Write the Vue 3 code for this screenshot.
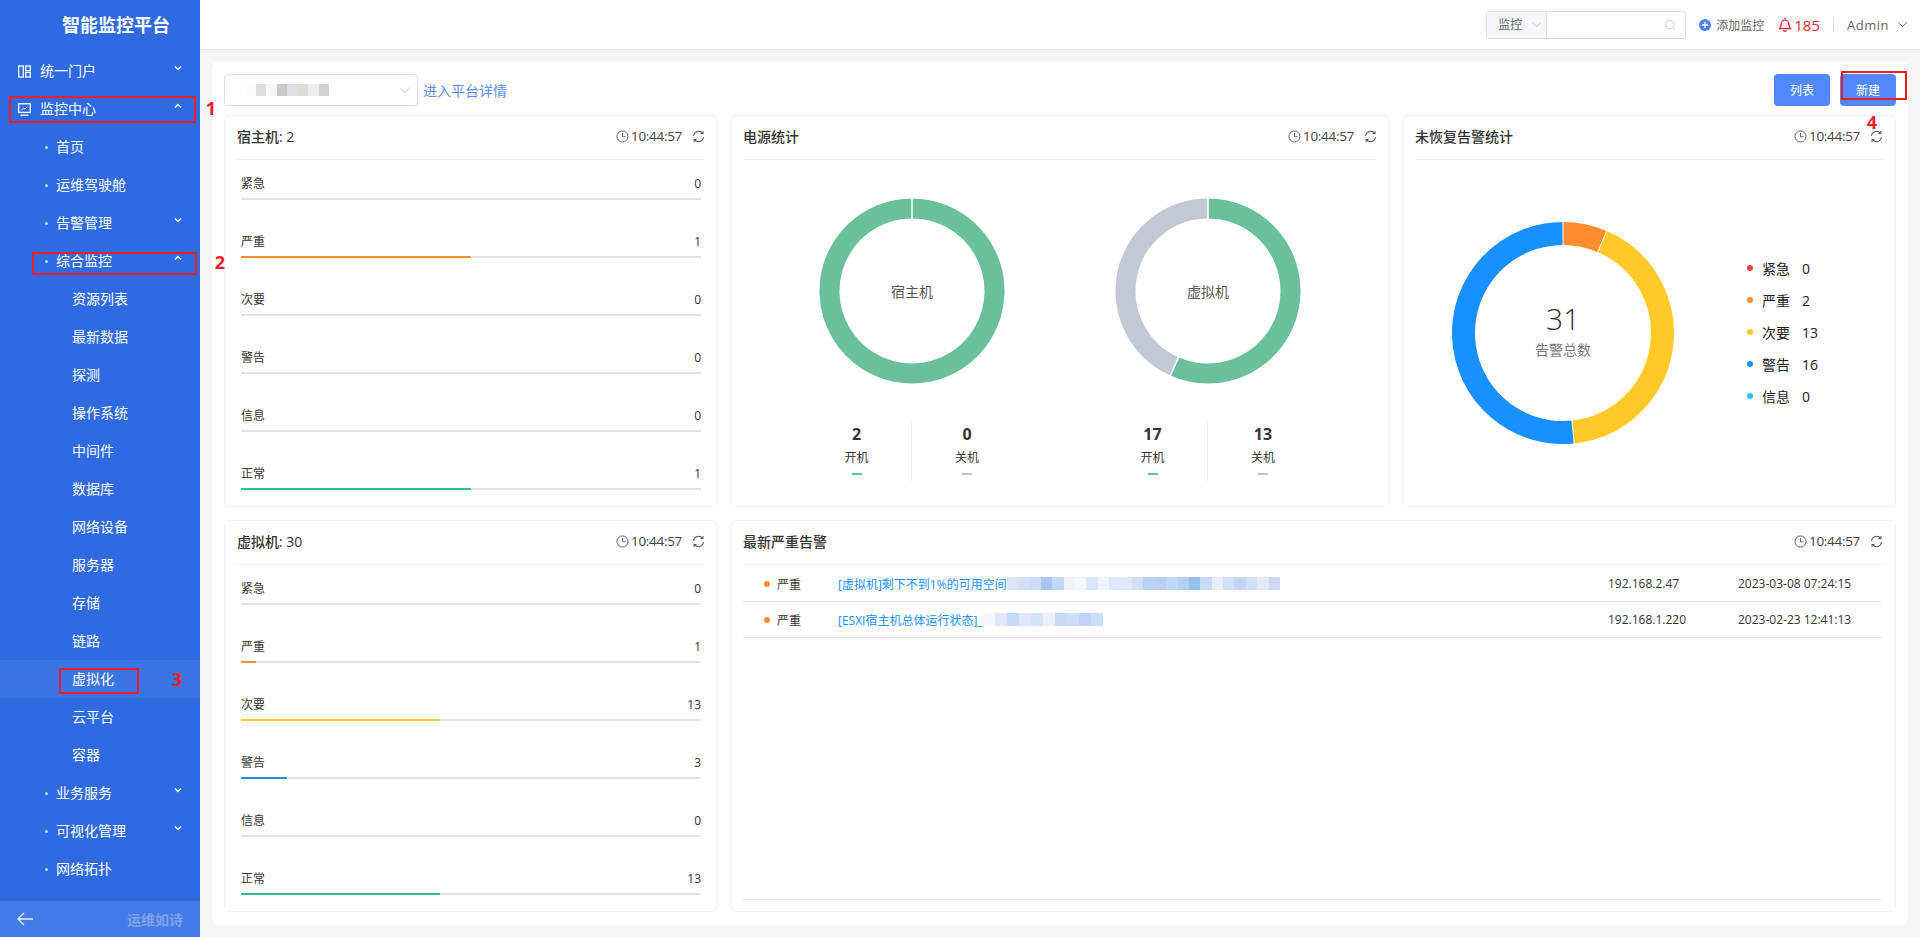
<template>
  <div class="app">
    <aside class="side">
      <div class="logo">智能监控平台</div>
      <nav class="nav">
        <div
          v-for="item in menu"
          :key="item.text"
          class="nav-row"
          :class="['lv' + item.level, { active: item.active }]"
        >
          <svg v-if="item.icon === 'grid'" class="nav-icon" viewBox="0 0 13 13" fill="none" stroke="#fff" stroke-width="1.3">
            <rect x="0.7" y="1" width="4.6" height="11" />
            <rect x="7.7" y="1" width="4.6" height="4.6" />
            <rect x="7.7" y="7.4" width="4.6" height="4.6" />
          </svg>
          <svg v-if="item.icon === 'monitor'" class="nav-icon" viewBox="0 0 13 13" fill="none" stroke="#fff" stroke-width="1.3">
            <rect x="0.7" y="0.8" width="11.6" height="8.6" />
            <path d="M2.5 12.2h8" />
            <path d="M3.6 7l2-1.8 1.3.8 2.4-2.2" stroke-width="1" />
          </svg>
          <i v-if="item.level === 2" class="dot"></i>
          <span class="nav-text">{{ item.text }}</span>
          <svg v-if="item.arrow" class="nav-arrow" viewBox="0 0 8 6" fill="none" stroke="#fff" stroke-width="1.3">
            <path :d="item.arrow === 'up' ? 'M1 4.5L4 1.5l3 3' : 'M1 1.5l3 3 3-3'" />
          </svg>
        </div>
      </nav>
      <div class="side-foot">
        <svg class="back" viewBox="0 0 16 14" fill="none" stroke="#e6eeff" stroke-width="1.3">
          <path d="M16 7H1M7 1L1 7l6 6" />
        </svg>
        <span>运维如诗</span>
      </div>
    </aside>

    <div class="right">
      <header class="top">
        <div class="search">
          <div class="search-type">
            <span>监控</span>
            <svg viewBox="0 0 12 8" fill="none" stroke="#c0c4cc"><path d="M1 1.5l5 5 5-5" /></svg>
          </div>
          <div class="search-input">
            <svg viewBox="0 0 14 14" fill="none" stroke="#c6cad2" stroke-width="1.1">
              <circle cx="6.5" cy="6.5" r="5" />
              <path d="M10.2 10.2l2.6 2.6" />
            </svg>
          </div>
        </div>
        <div class="add">
          <svg viewBox="0 0 12 12">
            <circle cx="6" cy="6" r="6" fill="#4f80f6" />
            <path d="M3 6h6M6 3v6" stroke="#fff" stroke-width="1.4" />
          </svg>
          <span>添加监控</span>
        </div>
        <div class="bell">
          <svg viewBox="0 0 14 15" fill="none" stroke="#f5222d" stroke-width="1.3">
            <path d="M7 0.8v1.4M1.6 11.6c1.2-1.2 1.6-2.6 1.6-4.6a3.8 3.8 0 0 1 7.6 0c0 2 .4 3.4 1.6 4.6zM5.3 13.1a1.8 1.8 0 0 0 3.4 0" />
          </svg>
          <span>185</span>
        </div>
        <i class="top-line"></i>
        <div class="user">
          <span>Admin</span>
          <svg viewBox="0 0 12 8" fill="none" stroke="#666" stroke-width="1.1"><path d="M1 1.5l5 5 5-5" /></svg>
        </div>
      </header>

      <main class="main">
        <section class="panel">
          <div class="toolbar">
            <div class="platform">
              <div class="mosaic mosaic-select">
                <i v-for="(c, i) in selectCells" :key="i" :style="{ background: c }"></i>
              </div>
              <svg viewBox="0 0 12 8" fill="none" stroke="#c0c4cc"><path d="M1 1.5l5 5 5-5" /></svg>
            </div>
            <a class="detail">进入平台详情</a>
            <div class="btns">
              <button type="button">列表</button>
              <button type="button">新建</button>
            </div>
          </div>

          <div class="grid">
            <div class="card">
              <div class="card-head">
                <span class="card-title">宿主机: 2</span>
                <span class="time">
                  <svg class="clock" viewBox="0 0 14 14" fill="none" stroke="#555" stroke-width="1">
                    <circle cx="7" cy="7" r="6" />
                    <path d="M7 3.2V7.3h3.2" />
                  </svg>
                  10:44:57
                </span>
                <svg class="refresh" viewBox="0 0 14 14" fill="none" stroke="#555" stroke-width="1.1">
                  <path d="M1.6 6.2A5.5 5.5 0 0 1 11.4 3.6M12.4 7.8A5.5 5.5 0 0 1 2.6 10.4" />
                  <path d="M11.8 1.2v2.6H9.2M2.2 12.8v-2.6h2.6" />
                </svg>
              </div>
              <div class="levels">
                <div v-for="row in hostLevels" :key="row.name" class="level">
                  <div class="level-text">
                    <span>{{ row.name }}</span>
                    <span>{{ row.value }}</span>
                  </div>
                  <div class="track"><div class="fill" :style="{ width: row.pct + '%', background: row.color }"></div></div>
                </div>
              </div>
            </div>

            <div class="card">
              <div class="card-head">
                <span class="card-title">电源统计</span>
                <span class="time">
                  <svg class="clock" viewBox="0 0 14 14" fill="none" stroke="#555" stroke-width="1">
                    <circle cx="7" cy="7" r="6" />
                    <path d="M7 3.2V7.3h3.2" />
                  </svg>
                  10:44:57
                </span>
                <svg class="refresh" viewBox="0 0 14 14" fill="none" stroke="#555" stroke-width="1.1">
                  <path d="M1.6 6.2A5.5 5.5 0 0 1 11.4 3.6M12.4 7.8A5.5 5.5 0 0 1 2.6 10.4" />
                  <path d="M11.8 1.2v2.6H9.2M2.2 12.8v-2.6h2.6" />
                </svg>
              </div>
              <div class="power">
                <div v-for="p in power" :key="p.name" class="power-item">
                  <div class="ring-wrap">
                    <svg class="ring" viewBox="0 0 188 188">
                      <path
                        v-for="s in ringPaths(p.parts, 82.5, 94)"
                        :key="s.color"
                        :d="s.d"
                        fill="none"
                        :stroke="s.color"
                        stroke-width="20"
                      />
                      <path
                        v-for="(g, i) in ringGaps(p.parts, 71, 94, 94)"
                        :key="i"
                        :d="g"
                        stroke="#fff"
                        stroke-width="1.6"
                      />
                    </svg>
                    <span class="ring-label">{{ p.name }}</span>
                  </div>
                  <div class="power-nums">
                    <div class="num-col">
                      <b>{{ p.on }}</b>
                      <span>开机</span>
                      <i class="tick on"></i>
                    </div>
                    <div class="num-col">
                      <b>{{ p.off }}</b>
                      <span>关机</span>
                      <i class="tick off"></i>
                    </div>
                  </div>
                </div>
              </div>
            </div>

            <div class="card">
              <div class="card-head">
                <span class="card-title">未恢复告警统计</span>
                <span class="time">
                  <svg class="clock" viewBox="0 0 14 14" fill="none" stroke="#555" stroke-width="1">
                    <circle cx="7" cy="7" r="6" />
                    <path d="M7 3.2V7.3h3.2" />
                  </svg>
                  10:44:57
                </span>
                <svg class="refresh" viewBox="0 0 14 14" fill="none" stroke="#555" stroke-width="1.1">
                  <path d="M1.6 6.2A5.5 5.5 0 0 1 11.4 3.6M12.4 7.8A5.5 5.5 0 0 1 2.6 10.4" />
                  <path d="M11.8 1.2v2.6H9.2M2.2 12.8v-2.6h2.6" />
                </svg>
              </div>
              <div class="alarm">
                <div class="alarm-ring">
                  <svg class="ring" viewBox="0 0 224 224">
                    <path
                      v-for="s in ringPaths(alarmParts, 99.5, 112)"
                      :key="s.color"
                      :d="s.d"
                      fill="none"
                      :stroke="s.color"
                      stroke-width="23"
                    />
                    <path
                      v-for="(g, i) in ringGaps(alarmParts, 87, 112, 112)"
                      :key="i"
                      :d="g"
                      stroke="#fff"
                      stroke-width="1"
                    />
                  </svg>
                  <div class="alarm-center">
                    <strong>31</strong>
                    <span>告警总数</span>
                  </div>
                </div>
                <ul class="legend">
                  <li v-for="l in legend" :key="l.name">
                    <i :style="{ background: l.color }"></i>
                    <span class="legend-name">{{ l.name }}</span>
                    <span>{{ l.value }}</span>
                  </li>
                </ul>
              </div>
            </div>

            <div class="card">
              <div class="card-head">
                <span class="card-title">虚拟机: 30</span>
                <span class="time">
                  <svg class="clock" viewBox="0 0 14 14" fill="none" stroke="#555" stroke-width="1">
                    <circle cx="7" cy="7" r="6" />
                    <path d="M7 3.2V7.3h3.2" />
                  </svg>
                  10:44:57
                </span>
                <svg class="refresh" viewBox="0 0 14 14" fill="none" stroke="#555" stroke-width="1.1">
                  <path d="M1.6 6.2A5.5 5.5 0 0 1 11.4 3.6M12.4 7.8A5.5 5.5 0 0 1 2.6 10.4" />
                  <path d="M11.8 1.2v2.6H9.2M2.2 12.8v-2.6h2.6" />
                </svg>
              </div>
              <div class="levels">
                <div v-for="row in vmLevels" :key="row.name" class="level">
                  <div class="level-text">
                    <span>{{ row.name }}</span>
                    <span>{{ row.value }}</span>
                  </div>
                  <div class="track"><div class="fill" :style="{ width: row.pct + '%', background: row.color }"></div></div>
                </div>
              </div>
            </div>

            <div class="card wide">
              <div class="card-head">
                <span class="card-title">最新严重告警</span>
                <span class="time">
                  <svg class="clock" viewBox="0 0 14 14" fill="none" stroke="#555" stroke-width="1">
                    <circle cx="7" cy="7" r="6" />
                    <path d="M7 3.2V7.3h3.2" />
                  </svg>
                  10:44:57
                </span>
                <svg class="refresh" viewBox="0 0 14 14" fill="none" stroke="#555" stroke-width="1.1">
                  <path d="M1.6 6.2A5.5 5.5 0 0 1 11.4 3.6M12.4 7.8A5.5 5.5 0 0 1 2.6 10.4" />
                  <path d="M11.8 1.2v2.6H9.2M2.2 12.8v-2.6h2.6" />
                </svg>
              </div>
              <div class="table">
                <div v-for="r in alarms" :key="r.ip" class="tr">
                  <span class="sev"><i></i>严重</span>
                  <span class="msg">
                    <a>{{ r.msg }}</a>
                    <span class="mosaic mosaic-link">
                      <i v-for="(c, i) in r.cells" :key="i" :style="{ background: c }"></i>
                    </span>
                  </span>
                  <span>{{ r.ip }}</span>
                  <span>{{ r.time }}</span>
                </div>
              </div>
            </div>
          </div>
        </section>
      </main>
    </div>

    <!-- red annotations on top of the screenshot -->
    <i class="mark m1"></i><b class="mark-no n1">1</b>
    <i class="mark m2"></i><b class="mark-no n2">2</b>
    <i class="mark m3"></i><b class="mark-no n3">3</b>
    <i class="mark m4"></i><b class="mark-no n4">4</b>
  </div>
</template>

<script setup>
const menu = [
  { text: '统一门户', level: 1, icon: 'grid', arrow: 'down' },
  { text: '监控中心', level: 1, icon: 'monitor', arrow: 'up' },
  { text: '首页', level: 2 },
  { text: '运维驾驶舱', level: 2 },
  { text: '告警管理', level: 2, arrow: 'down' },
  { text: '综合监控', level: 2, arrow: 'up' },
  { text: '资源列表', level: 3 },
  { text: '最新数据', level: 3 },
  { text: '探测', level: 3 },
  { text: '操作系统', level: 3 },
  { text: '中间件', level: 3 },
  { text: '数据库', level: 3 },
  { text: '网络设备', level: 3 },
  { text: '服务器', level: 3 },
  { text: '存储', level: 3 },
  { text: '链路', level: 3 },
  { text: '虚拟化', level: 3, active: true },
  { text: '云平台', level: 3 },
  { text: '容器', level: 3 },
  { text: '业务服务', level: 2, arrow: 'down' },
  { text: '可视化管理', level: 2, arrow: 'down' },
  { text: '网络拓扑', level: 2 }
]

const GREEN = '#2ec28e'
const ORANGE = '#ff8c2f'
const YELLOW = '#ffca28'
const BLUE = '#1890ff'

const hostLevels = [
  { name: '紧急', value: 0, pct: 0, color: '#e5404a' },
  { name: '严重', value: 1, pct: 50, color: ORANGE },
  { name: '次要', value: 0, pct: 0, color: YELLOW },
  { name: '警告', value: 0, pct: 0, color: BLUE },
  { name: '信息', value: 0, pct: 0, color: '#29c5ff' },
  { name: '正常', value: 1, pct: 50, color: GREEN }
]

const vmLevels = [
  { name: '紧急', value: 0, pct: 0, color: '#e5404a' },
  { name: '严重', value: 1, pct: 3.3, color: ORANGE },
  { name: '次要', value: 13, pct: 43.3, color: YELLOW },
  { name: '警告', value: 3, pct: 10, color: BLUE },
  { name: '信息', value: 0, pct: 0, color: '#29c5ff' },
  { name: '正常', value: 13, pct: 43.3, color: GREEN }
]

const power = [
  { name: '宿主机', on: 2, off: 0, parts: [{ value: 2, color: '#6ac09b' }] },
  { name: '虚拟机', on: 17, off: 13, parts: [{ value: 17, color: '#6ac09b' }, { value: 13, color: '#c3c8d6' }] }
]

const alarmParts = [
  { value: 2, color: ORANGE },
  { value: 13, color: YELLOW },
  { value: 16, color: BLUE }
]

const legend = [
  { name: '紧急', value: 0, color: '#e5404a' },
  { name: '严重', value: 2, color: ORANGE },
  { name: '次要', value: 13, color: YELLOW },
  { name: '警告', value: 16, color: BLUE },
  { name: '信息', value: 0, color: '#29c5ff' }
]

const selectCells = ['#fafafa', '#dedede', '#f7f7f3', '#c9c9c9', '#dcdfe3', '#dfdcd9', '#ebeff2', '#d2d2d2']

const alarms = [
  {
    msg: '[虚拟机]剩下不到1%的可用空间',
    ip: '192.168.2.47',
    time: '2023-03-08 07:24:15',
    cells: ['#dbe6fb', '#d3e0f9', '#cfdcf7', '#acc5f3', '#c3d8f6', '#eef3fc', '#f6f8fe', '#dde6f9', '#eff3fc', '#dce8fb', '#e2eafa', '#d2ddf6', '#b6d3f6', '#b9cef5', '#bfd8f6', '#b2d0f6', '#98c1f3', '#c9dcf7', '#e8effb', '#cfe1f9', '#c3d6f6', '#cfe0f8', '#e2eafa', '#ccdaf6']
  },
  {
    msg: '[ESXI宿主机总体运行状态]_',
    ip: '192.168.1.220',
    time: '2023-02-23 12:41:13',
    cells: ['#f4f7fd', '#dde8fb', '#c9daf6', '#dde9fa', '#d2e5fa', '#eaf0fb', '#c9daf8', '#cedcf8', '#c3d4f6', '#c9def8']
  }
]

function point(cx, r, deg) {
  const a = (deg - 90) * Math.PI / 180
  return [cx + r * Math.cos(a), cx + r * Math.sin(a)]
}

function slices(parts) {
  const total = parts.reduce((n, p) => n + p.value, 0)
  let from = 0
  return parts.map((p) => {
    const to = from + p.value / total * 360
    const out = { from, to, color: p.color }
    from = to
    return out
  })
}

function ringPaths(parts, r, cx) {
  return slices(parts).map((s) => {
    const end = s.to - s.from >= 360 ? s.to - 0.01 : s.to
    const [x1, y1] = point(cx, r, s.from)
    const [x2, y2] = point(cx, r, end)
    const large = end - s.from > 180 ? 1 : 0
    return { color: s.color, d: `M${x1} ${y1}A${r} ${r} 0 ${large} 1 ${x2} ${y2}` }
  })
}

function ringGaps(parts, r1, r2, cx) {
  return slices(parts).map((s) => {
    const [x1, y1] = point(cx, r1, s.from)
    const [x2, y2] = point(cx, r2, s.from)
    return `M${x1} ${y1}L${x2} ${y2}`
  })
}
</script>

<style>
html, body {
  margin: 0;
  padding: 0;
  overflow: hidden;
}
</style>

<style scoped>
.app {
  position: relative;
  display: flex;
  width: 100%;
  height: 937px;
  overflow: hidden;
  font-family: "Open Sans", "Noto Sans CJK SC", sans-serif;
  font-size: 12px;
  color: #333;
}

.side {
  width: 200px;
  flex: none;
  display: flex;
  flex-direction: column;
  background: #2f6ae0;
  color: #fff;
}
.logo {
  height: 52px;
  line-height: 50px;
  padding-left: 62px;
  font-size: 18px;
  font-weight: 700;
}
.nav {
  flex: 1;
}
.nav-row {
  position: relative;
  display: flex;
  align-items: center;
  height: 38px;
  font-size: 14px;
  line-height: 38px;
}
.nav-row.lv1 { padding-left: 18px; }
.nav-row.lv2 { padding-left: 45px; }
.nav-row.lv3 { padding-left: 72px; }
.nav-row.active { background: #3b74e5; }
.nav-icon {
  width: 13px;
  height: 13px;
  margin-right: 9px;
}
.dot {
  width: 3px;
  height: 3px;
  border-radius: 50%;
  background: #c4d6f8;
  margin-right: 8px;
}
.nav-arrow {
  position: absolute;
  left: 174px;
  top: 13px;
  width: 8px;
  height: 6px;
}
.side-foot {
  height: 36px;
  display: flex;
  align-items: center;
  justify-content: space-between;
  padding: 0 17px;
  background: #4579e5;
  font-size: 14px;
  font-weight: 700;
  color: #7fa3ee;
}
.back {
  width: 16px;
  height: 14px;
}

.right {
  flex: 1;
  min-width: 0;
  display: flex;
  flex-direction: column;
}
.top {
  height: 49px;
  flex: none;
  display: flex;
  align-items: center;
  justify-content: flex-end;
  padding-right: 12px;
  background: #fff;
  border-bottom: 1px solid #e6e6e6;
}
.search {
  display: flex;
  width: 200px;
  height: 28px;
  box-sizing: border-box;
  border: 1px solid #dcdfe6;
  border-radius: 3px;
}
.search-type {
  width: 60px;
  display: flex;
  align-items: center;
  gap: 9px;
  padding-left: 11px;
  box-sizing: border-box;
  background: #f5f7fa;
  border-right: 1px solid #dcdfe6;
  color: #606266;
  line-height: 26px;
}
.search-type svg {
  width: 11px;
  height: 7px;
}
.search-input {
  flex: 1;
  display: flex;
  align-items: center;
  justify-content: flex-end;
  padding-right: 9px;
}
.search-input svg {
  width: 12px;
  height: 12px;
}
.add {
  display: flex;
  align-items: center;
  gap: 5px;
  margin-left: 13px;
  color: #666;
}
.add svg {
  width: 12px;
  height: 12px;
}
.bell {
  display: flex;
  align-items: center;
  gap: 2px;
  margin-left: 14px;
  font-size: 15px;
  color: #f5222d;
}
.bell svg {
  width: 14px;
  height: 15px;
}
.top-line {
  width: 1px;
  height: 15px;
  margin: 0 13px;
  background: #d9dde3;
}
.user {
  display: flex;
  align-items: center;
  gap: 8px;
  font-size: 13px;
  letter-spacing: 0.5px;
  color: #666;
}
.user svg {
  width: 11px;
  height: 7px;
}

.main {
  flex: 1;
  min-height: 0;
  padding: 12px;
  background: #f5f5f5;
}
.panel {
  height: 100%;
  box-sizing: border-box;
  padding: 12px;
  background: #fff;
  border-radius: 6px;
  display: flex;
  flex-direction: column;
}
.toolbar {
  height: 32px;
  flex: none;
  display: flex;
  align-items: center;
  margin-bottom: 9px;
}
.platform {
  width: 194px;
  height: 32px;
  box-sizing: border-box;
  border: 1px solid #dcdfe6;
  border-radius: 4px;
  display: flex;
  align-items: center;
  justify-content: space-between;
  padding: 0 6px 0 20px;
}
.platform svg {
  width: 12px;
  height: 8px;
}
.mosaic {
  display: inline-flex;
}
.mosaic i {
  display: block;
}
.mosaic-select i {
  width: 10.5px;
  height: 12px;
}
.mosaic-link i {
  width: 11.4px;
  height: 13px;
}
.tr:nth-child(2) .mosaic-link i {
  width: 12px;
}
.detail {
  margin-left: 5px;
  font-size: 14px;
  color: #5b8cff;
}
.btns {
  margin-left: auto;
  display: flex;
  gap: 10px;
}
.btns button {
  width: 56px;
  height: 32px;
  padding: 0;
  border: none;
  border-radius: 4px;
  background: #5288ff;
  color: #fff;
  font: inherit;
  font-size: 12px;
}

.grid {
  flex: 1;
  min-height: 0;
  display: grid;
  grid-template-columns: 494px 660px 494px;
  grid-template-rows: 392px 392px;
  gap: 13px 12px;
}
.card {
  box-sizing: border-box;
  border: 1px solid #eef0f7;
  border-radius: 6px;
  padding: 0 12px;
  display: flex;
  flex-direction: column;
  min-width: 0;
}
.wide {
  grid-column: span 2;
}
.card-head {
  height: 44px;
  box-sizing: border-box;
  padding-bottom: 3px;
  flex: none;
  display: flex;
  align-items: center;
  border-bottom: 1px solid #eef0f4;
}
.card-title {
  font-size: 14px;
  font-weight: 500;
  color: #333;
}
.time {
  margin-left: auto;
  display: flex;
  align-items: center;
  gap: 2px;
  font-size: 13.5px;
  font-weight: 500;
  letter-spacing: -0.3px;
  color: #444;
}
.clock {
  width: 13px;
  height: 13px;
}
.refresh {
  width: 13px;
  height: 13px;
  margin-left: 10px;
}

.levels {
  padding: 0 4px;
}
.level {
  height: 58px;
  padding-top: 12px;
  box-sizing: border-box;
}
.level-text {
  display: flex;
  justify-content: space-between;
  line-height: 18px;
  padding-top: 3px;
  color: #333;
}
.track {
  height: 2px;
  margin-top: 5px;
  background: #e4e4e4;
}
.fill {
  height: 100%;
}

.power {
  flex: 1;
  display: flex;
  justify-content: center;
  gap: 76px;
}
.power-item {
  width: 220px;
  display: flex;
  flex-direction: column;
  align-items: center;
}
.ring-wrap {
  position: relative;
  width: 188px;
  height: 188px;
  margin-top: 37px;
}
.ring {
  display: block;
  width: 100%;
  height: 100%;
}
.ring-label {
  position: absolute;
  inset: 0;
  display: flex;
  align-items: center;
  justify-content: center;
  font-size: 14px;
  color: #555;
}
.power-nums {
  width: 220px;
  margin-top: 37px;
  display: grid;
  grid-template-columns: 1fr 1fr;
}
.num-col {
  height: 59px;
  display: flex;
  flex-direction: column;
  align-items: center;
}
.num-col:first-child {
  border-right: 1px solid #eee;
}
.num-col b {
  font-size: 16px;
  line-height: 24px;
  color: #333;
}
.num-col span {
  margin-top: 3px;
  line-height: 18px;
}
.tick {
  width: 10px;
  height: 2px;
  margin-top: 6px;
}
.tick.on { background: #6ac09b; }
.tick.off { background: #c3c8d6; }

.alarm {
  flex: 1;
  display: flex;
}
.alarm-ring {
  position: relative;
  width: 224px;
  height: 224px;
  margin: 61px 0 0 36px;
}
.alarm-center {
  position: absolute;
  inset: 0;
  padding-bottom: 7px;
  box-sizing: border-box;
  display: flex;
  flex-direction: column;
  align-items: center;
  justify-content: center;
}
.alarm-center strong {
  font-size: 30px;
  font-weight: 300;
  line-height: 40px;
  color: #333;
}
.alarm-center span {
  font-size: 14px;
  line-height: 22px;
  color: #777;
}
.legend {
  list-style: none;
  margin: 92px 0 0 0;
  padding: 0 0 0 72px;
}
.legend li {
  height: 32px;
  display: flex;
  align-items: center;
  font-size: 14px;
  color: #222;
}
.legend i {
  width: 6px;
  height: 6px;
  border-radius: 50%;
  margin-right: 9px;
}
.legend-name {
  width: 40px;
}

.table {
  flex: 1;
  padding-top: 1px;
  border-bottom: 1px solid #e8e8e8;
  margin-bottom: 11px;
}
.tr {
  height: 36px;
  box-sizing: border-box;
  border-bottom: 1px solid #e4e4e4;
  display: grid;
  grid-template-columns: 95px 770px 130px auto;
  align-items: center;
  color: #333;
}
.sev {
  display: flex;
  align-items: center;
  padding-left: 21px;
}
.sev i {
  width: 6px;
  height: 6px;
  border-radius: 50%;
  background: #ff8c2f;
  margin-right: 7px;
}
.msg {
  display: flex;
  align-items: center;
}
.msg a {
  color: #1890ff;
}

.mark {
  position: absolute;
  box-sizing: border-box;
  border: 2px solid #ee1c25;
}
.m1 { left: 9px; top: 96px; width: 187px; height: 27px; }
.m2 { left: 32px; top: 252px; width: 165px; height: 23px; }
.m3 { left: 59px; top: 668px; width: 80px; height: 26px; }
.m4 { left: 1841px; top: 71px; width: 66px; height: 29px; }
.mark-no {
  position: absolute;
  width: 20px;
  text-align: center;
  font-size: 18px;
  line-height: 20px;
  font-weight: 700;
  color: #ee1c25;
}
.n1 { left: 201px; top: 98px; }
.n2 { left: 210px; top: 252px; }
.n3 { left: 167px; top: 669px; }
.n4 { left: 1862px; top: 112px; }
</style>
